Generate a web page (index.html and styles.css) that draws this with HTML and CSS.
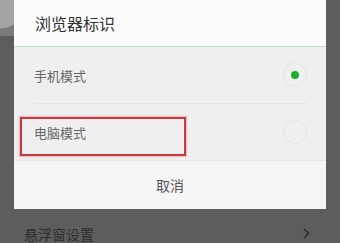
FILE: index.html
```html
<!DOCTYPE html>
<html lang="zh-CN">
<head>
<meta charset="UTF-8" />
<title>浏览器标识</title>
<link rel="stylesheet" href="styles.css">
</head>
<body>

<div class="dialog">
    <div class="dialog-title">浏览器标识</div>
    <div class="options">
        <div class="option">
            <span class="option-name">手机模式</span>
            <span class="radio checked"></span>
        </div>
        <div class="option marked">
            <span class="option-name">电脑模式</span>
            <span class="radio"></span>
        </div>
    </div>
    <div class="dialog-cancel">取消</div>
</div>

<!-- page behind the overlay -->
<div class="setting-row">
    <span>悬浮窗设置</span>
    <svg class="chevron" width="7" height="11" viewBox="0 0 7 11">
        <path d="M1 1 L5.5 5.5 L1 10" fill="none" stroke="#2e2e2e" stroke-width="1.6"/>
    </svg>
</div>

</body>
</html>
```

FILE: styles.css
```css
body {
    margin: 0;
    padding: 0;
    width: 340px;
    height: 243px;
    overflow: hidden;
    font-family: "Noto Sans CJK SC", "Noto Sans", sans-serif;
    background-color: #5d5d5d;
    background-image:
        radial-gradient(circle at 0px 4px, #a4a4a4 0, #a4a4a4 24px, transparent 25px),
        linear-gradient(#7a7a7a, #7a7a7a);
    background-size: 100% 100%, 14px 36px;
    background-repeat: no-repeat;
}

.dialog {
    margin: 0 14px;
    height: 209px;
    display: flex;
    flex-direction: column;
    background: #f4f4f4;
}

.dialog-title {
    height: 47px;
    box-sizing: border-box;
    padding-left: 21px;
    display: flex;
    align-items: center;
    font-size: 16px;
    color: #333;
    background: #fcfcfc;
    border-bottom: 1px solid #bfe2c6;
}

.options {
    background: #efefef;
    border-bottom: 1px solid #e6e6e6;
}

.option {
    height: 56px;
    margin: 0 19px 0 20px;
    display: flex;
    align-items: center;
    justify-content: space-between;
    position: relative;
}

.option + .option {
    border-top: 1px solid #e3e3e3;
}

.option-name {
    font-size: 13px;
    color: #666;
    margin-top: 1px;
}

.radio {
    width: 22px;
    height: 22px;
    border: 1.5px solid #e4e4e4;
    border-radius: 50%;
    display: flex;
    align-items: center;
    justify-content: center;
    margin-top: -1px;
}

.radio.checked::after {
    content: "";
    width: 8px;
    height: 8px;
    border-radius: 50%;
    background: #1aad2c;
}

/* red annotation box drawn over the row */
.option.marked::before {
    content: "";
    position: absolute;
    left: -14px;
    top: 13px;
    width: 162px;
    height: 35px;
    border: 2.5px solid #c9383e;
    box-shadow: 0 0 1px 1px rgba(240, 150, 150, 0.5);
}

.dialog-cancel {
    flex: 1;
    display: flex;
    align-items: center;
    justify-content: center;
    font-size: 14px;
    color: #555;
    background: #f5f5f5;
}

.setting-row {
    height: 34px;
    box-sizing: border-box;
    padding: 16px 30px 0 24px;
    display: flex;
    align-items: center;
    justify-content: space-between;
    font-size: 14px;
    line-height: 18px;
    color: #2e2e2e;
}

.chevron {
    margin-top: -2px;
}
```
